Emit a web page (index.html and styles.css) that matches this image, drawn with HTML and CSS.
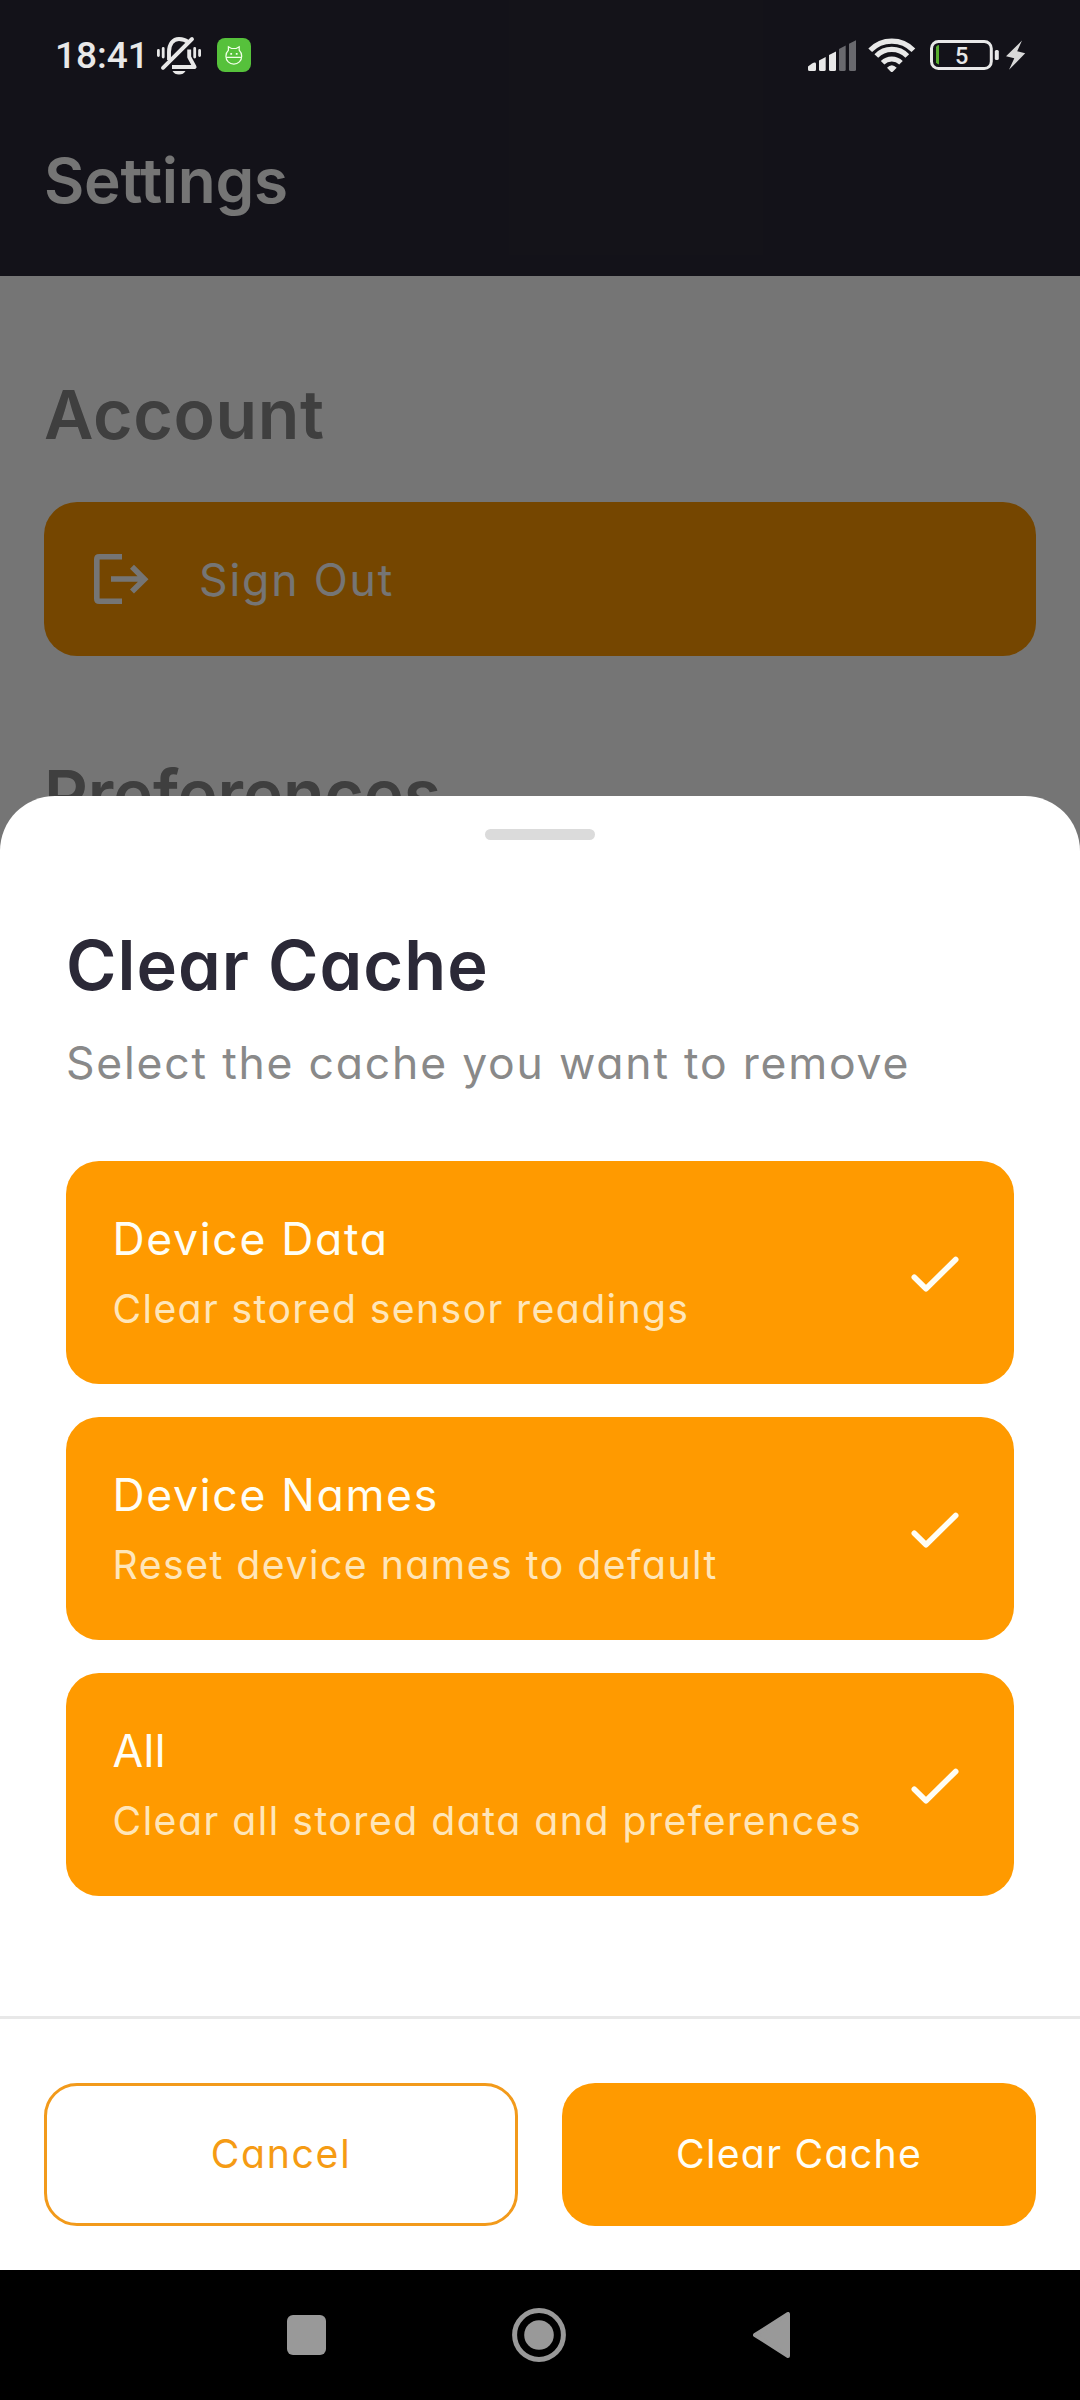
FILE: index.html
```html
<!DOCTYPE html>
<html lang="en">
<head>
<meta charset="utf-8">
<title>Settings</title>
<link rel="stylesheet" href="styles.css">
</head>
<body>
<div class="screen">
  <main class="page">
    <header class="app-bar"><h1 class="app-title">Settings</h1></header>
    <h2 class="section-title account">Account</h2>
    <button class="row-button">
      <svg class="row-icon" viewBox="0 0 66 66" fill="none" stroke="currentColor" stroke-width="5.6">
        <path d="M33 10.8H10.3q-2.5 0-2.5 2.5V52.7q0 2.5 2.5 2.5H33"/>
        <path d="M22 33H56M43 20.8 55.5 33.2 43 45.6"/>
      </svg>
      <span>Sign Out</span>
    </button>
    <h2 class="section-title preferences">Preferences</h2>
  </main>
  <div class="scrim"></div>

  <div class="status-bar">
    <span class="clock">18:41</span>
    <svg class="bell" viewBox="157 36 44 39" fill="none" stroke="#e8e8e8" stroke-width="3.9">
      <path d="M169 60V52C169 44 173 39 179 39C183 39 186 40.2 188 42"/>
      <path d="M192 39 163 67.8" stroke-linecap="round"/>
      <path d="M189.2 49.5V57L194.6 67H172" stroke-linejoin="round"/>
      <path d="M172.5 71H185.5Q183.5 74.6 179 74.6T172.5 71Z" fill="#e8e8e8" stroke="none"/>
      <path d="M158.4 50.5V55.5M163.2 48.5V57M194.7 48.5V57M199.6 50.5V55.5" stroke-width="2.8" stroke-linecap="round"/>
    </svg>
    <svg class="badge" viewBox="217 38 34 34">
      <rect x="217" y="38" width="34" height="34" rx="8" fill="#56c13b"/>
      <g fill="none" stroke="#f1ffe9" stroke-width="1.2">
        <path d="M228.4 50.3V46.8L231.5 48.5H236.2L239.2 46.8V50.3C241 52 241.7 54 241.7 56.3A7.9 7.9 0 0 1 225.9 56.3C225.9 54 226.6 52 228.4 50.3ZM226 57.4H241.6"/>
      </g>
      <path d="M230.3 53h1.8v1.8h-1.8zM235.8 53h1.8v1.8h-1.8z" fill="#f1ffe9"/>
    </svg>
    <svg class="indicators" viewBox="808 36 218 38">
      <g fill="#e8e8e8">
        <path d="M808 71V66.5L812 63.4Q816 61.5 816 64V69.5Q816 71 814.5 71H809.5Q808 71 808 69.5Z"/>
        <path d="M819 60.5 825.7 57V69.5Q825.7 71 824.2 71H820.5Q819 71 819 69.5Z"/>
        <path d="M829 55 836 51.5V69.5Q836 71 834.5 71H830.5Q829 71 829 69.5Z"/>
      </g>
      <g fill="#69696e">
        <path d="M839 49 845.7 45.5V69.5Q845.7 71 844.2 71H840.5Q839 71 839 69.5Z"/>
        <path d="M849 43.8 856 40.2V69.5Q856 71 854.5 71H850.5Q849 71 849 69.5Z"/>
      </g>
      <g fill="none" stroke="#e8e8e8">
        <path d="M870.2 50.3A30 30 0 0 1 913.4 50.3" stroke-width="5.2"/>
        <path d="M876.3 56A21.5 21.5 0 0 1 907.3 56" stroke-width="5.2"/>
        <path d="M882.6 62.7A13 13 0 0 1 901 62.7" stroke-width="5"/>
        <rect x="931.5" y="41.5" width="59.8" height="27" rx="7" stroke-width="3"/>
      </g>
      <path d="M887 67.8Q891.8 62.6 896.7 67.8L893 71.5Q891.8 72.6 890.6 71.5Z" fill="#e8e8e8"/>
      <rect x="994.8" y="50" width="4" height="10" rx="1.5" fill="#e8e8e8"/>
      <path d="M936 47Q937 45.2 939 45V64.5Q937 64 936 62.5Z" fill="#58ad2f"/>
      <text class="charge" x="961.6" y="64" text-anchor="middle">5</text>
      <path d="M1022 40.5 1006 56.3 1014.3 58.3 1009 69.8 1025.2 53.3 1017.2 51.3Z" fill="#d8d8d8"/>
    </svg>
  </div>

  <section class="sheet">
    <div class="handle"></div>
    <div class="sheet-body">
      <h2 class="sheet-title">Clear Cache</h2>
      <p class="sheet-subtitle">Select the cache you want to remove</p>
      <div class="options">
        <div class="option">
          <div class="option-text"><div class="option-name">Device Data</div><div class="option-note data-note">Clear stored sensor readings</div></div>
          <svg class="check" viewBox="0 0 66 66"><path d="M12.3 37.2 24 48.8 53.7 19.4"/></svg>
        </div>
        <div class="option">
          <div class="option-text"><div class="option-name">Device Names</div><div class="option-note">Reset device names to default</div></div>
          <svg class="check" viewBox="0 0 66 66"><path d="M12.3 37.2 24 48.8 53.7 19.4"/></svg>
        </div>
        <div class="option">
          <div class="option-text"><div class="option-name all-name">All</div><div class="option-note">Clear all stored data and preferences</div></div>
          <svg class="check" viewBox="0 0 66 66"><path d="M12.3 37.2 24 48.8 53.7 19.4"/></svg>
        </div>
      </div>
    </div>
    <div class="actions">
      <button class="action cancel">Cancel</button>
      <button class="action confirm">Clear Cache</button>
    </div>
    <nav class="nav-bar">
      <svg class="recent" viewBox="0 0 39 40"><rect width="39" height="40" rx="6"/></svg>
      <svg class="home" viewBox="0 0 54 54"><circle cx="27" cy="27" r="24.4" fill="none" stroke="#999" stroke-width="5"/><circle cx="27" cy="27" r="14.8"/></svg>
      <svg class="back" viewBox="0 0 37 46"><path d="M2 23 35 2V44Z" stroke="#999" stroke-width="4" stroke-linejoin="round"/></svg>
    </nav>
  </section>
</div>
</body>
</html>
```
FILE: styles.css
```css
* { box-sizing: border-box; }
body {
  margin: 0;
  font-family: Inter, "Liberation Sans", sans-serif;
  font-feature-settings: "cv11";
}
h1, h2, p { margin: 0; font-weight: 600; }
button {
  border: 0;
  font: inherit;
  font-feature-settings: inherit;
}
svg { display: block; flex: none; }

.screen {
  position: relative;
  width: 1080px;
  height: 2400px;
  overflow: hidden;
  background: #fff;
}

/* Settings page behind the sheet */
.app-bar { height: 276px; padding: 136px 44px 0; background: #2b2937; }
.app-title { font-size: 62px; line-height: 90px; letter-spacing: -0.25px; color: #fff; }
.section-title { margin: 88px 44px 0; font-size: 68px; line-height: 100px; color: #898989; }
.account { letter-spacing: 0.6px; }
.preferences { letter-spacing: -0.2px; }
.row-button {
  display: flex;
  align-items: center;
  gap: 44px;
  width: 992px;
  height: 154px;
  margin: 38px 44px 0;
  padding: 0 44px;
  border-radius: 33px;
  background: #ff9a00;
  color: #fff;
  font-size: 44.5px;
  letter-spacing: 1.85px;
}
.row-button span { padding-top: 2px; }
.row-icon { width: 66px; height: 66px; margin-left: 1px; }

.scrim { position: absolute; inset: 0; background: rgba(0, 0, 0, 0.54); }

/* System status bar */
.status-bar {
  position: absolute;
  inset: 0 0 auto;
  display: flex;
  height: 110px;
  padding: 36px 54px 0 55px;
}
.clock {
  width: 102px;
  color: #e8e8e8;
  font: 500 37px/40px Roboto, "Liberation Sans", sans-serif;
}
.bell { width: 44px; height: 39px; }
.badge { width: 34px; height: 34px; margin: 2px 0 0 16px; }
.indicators { width: 218px; height: 38px; margin-left: auto; }
.charge { fill: #e8e8e8; font: 500 23.5px Roboto, "Liberation Sans", sans-serif; }

/* Bottom sheet */
.sheet {
  position: absolute;
  inset: 796px 0 0;
  display: flex;
  flex-direction: column;
  border-radius: 55px 55px 0 0;
  background: #fff;
  overflow: hidden;
}
.handle { flex: none; width: 110px; height: 11px; margin: 33px auto 0; border-radius: 5.5px; background: #dbdbdb; }
.sheet-body { flex: 1; padding: 76px 66px 0; }
.sheet-title { font-size: 68.5px; line-height: 100px; letter-spacing: 1px; color: #2b2937; }
.sheet-subtitle {
  margin-top: 15px;
  font-size: 44.5px;
  font-weight: 400;
  line-height: 64px;
  letter-spacing: 1.78px;
  color: #898989;
  white-space: nowrap;
}
.options { display: grid; gap: 33px; margin-top: 66px; }
.option {
  display: flex;
  align-items: center;
  justify-content: space-between;
  height: 223px;
  padding: 0 46px;
  border-radius: 33px;
  background: #ff9a00;
  white-space: nowrap;
}
.option-text { padding-left: 0.5px; }
.option-name { margin-top: -1px; font-size: 44.5px; line-height: 64px; letter-spacing: 1.7px; color: #fffef5; }
.all-name { letter-spacing: 0.4px; }
.option-note { margin-top: 10px; font-size: 39.2px; line-height: 56px; letter-spacing: 1.5px; color: #ffe6b9; }
.data-note { letter-spacing: 1.38px; }
.check {
  width: 66px;
  height: 66px;
  fill: none;
  stroke: #fffef5;
  stroke-width: 5.6;
  stroke-linecap: round;
  stroke-linejoin: round;
}

.actions {
  display: grid;
  grid-template-columns: 1fr 1fr;
  gap: 44px;
  height: 254px;
  padding: 64px 44px 44px;
  border-top: 3px solid #e8e8e8;
}
.action { height: 143px; border-radius: 33px; font-size: 39.2px; padding: 0 0 2px; }
.cancel { border: 3px solid #f29a1b; background: #fff; color: #f59b14; letter-spacing: 1.7px; }
.confirm { background: #ff9a00; color: #fffef5; letter-spacing: 1.3px; }

/* System navigation */
.nav-bar { display: flex; align-items: center; height: 130px; padding-left: 287px; background: #000; fill: #999; }
.recent { width: 39px; height: 40px; }
.home { width: 54px; height: 54px; margin-left: 186px; }
.back { width: 37px; height: 46px; margin-left: 187px; }
```
